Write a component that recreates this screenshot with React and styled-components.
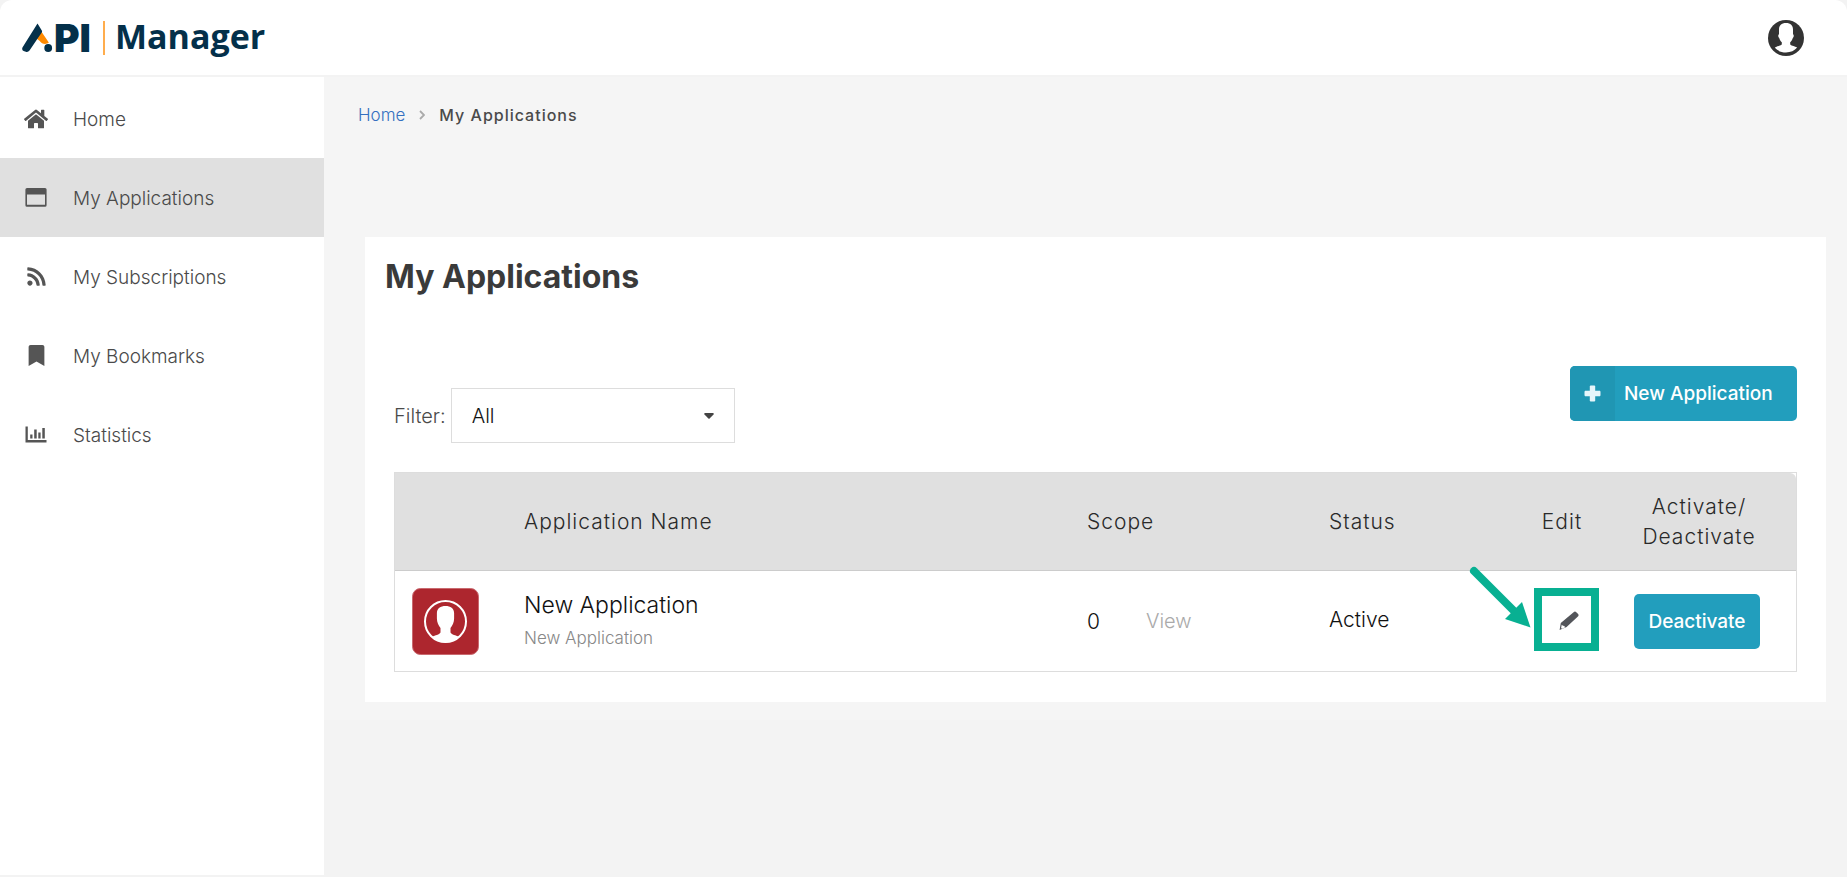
import React, { useState } from 'react';
import styled, { createGlobalStyle } from 'styled-components';
import { FaBookmark, FaHome, FaRss } from 'react-icons/fa';

const MENU = [
  { label: 'Home', icon: <FaHome size={24} /> },
  { label: 'My Applications', icon: <WindowIcon />, active: true },
  { label: 'My Subscriptions', icon: <FaRss size={21} /> },
  { label: 'My Bookmarks', icon: <FaBookmark size={21} /> },
  { label: 'Statistics', icon: <ChartIcon /> },
];

const APPLICATIONS = [
  {
    name: 'New Application',
    description: 'New Application',
    scope: 0,
    status: 'Active',
  },
];

function WindowIcon() {
  return (
    <svg width='22' height='19' viewBox='0 0 22 19'>
      <path
        fill='currentColor'
        fillRule='evenodd'
        d='M2 0h18a1.6 1.6 0 0 1 1.600 1.600v15.600a1.600 1.600 0 0 1-1.600 1.600H2a1.600 1.600 0 0 1-1.600-1.600V1.600A1.600 1.600 0 0 1 2 0zM2 6.500v10.300h18V6.500z'
      />
    </svg>
  );
}

function ChartIcon() {
  return (
    <svg width='22' height='17' viewBox='0 0 22 17'>
      <path
        fill='currentColor'
        d='M0.500 0.500h2.300v13.500h18.700v2.500H0.500zM5.200 8.500h2.300v4H5.200zM9.200 3.500h2.500v9H9.200zM13.300 6.500h2.300v6h-2.300zM17.300 2h2.500v10.500h-2.500z'
      />
    </svg>
  );
}

const PlusIcon = () => (
  <svg width='17' height='17' viewBox='0 0 17 17'>
    <path d='M8.500 1v15M1 8.500h15' stroke='currentColor' strokeWidth='5.400' />
    <path d='M8.500 .5v16M.5 8.500h16' stroke='currentColor' strokeWidth='4.600' />
  </svg>
);

const PencilIcon = () => (
  <svg width='20' height='20' viewBox='0 0 20 20'>
    <path
      fill='#53555a'
      fillRule='evenodd'
      d='M14.600 1.200q1.400-1.200 2.700 0l1.800 1.900q1 1.200-.2 2.400L7.600 16 .6 19l1.200-7zM2.700 13.800l-.6 3.200.8.800 3-1.200-.4-1.600-1.500-.2z'
    />
  </svg>
);

const AvatarIcon = () => (
  <svg width='36' height='36' viewBox='0 0 36 36'>
    <circle cx='18' cy='18' r='18' fill='#333' />
    <path
      fill='#fff'
      d='M18 3c4.600 0 7 2.600 7 6.400v4.800c1 .4 1 3-.2 3.800-.5 2-1.500 3.300-2.600 4.200v2.200c1.600 1.500 4.600 1.500 7 3.200-2.600 3.200-6.600 4.900-11.200 4.900S9.400 30.800 6.800 27.600c2.400-1.700 5.400-1.700 7-3.200v-2.200c-1.100-.9-2.100-2.200-2.600-4.200-1.200-.8-1.200-3.400-.2-3.800V9.400C11 5.600 13.400 3 18 3z'
    />
  </svg>
);

const AppIcon = () => (
  <svg width='67' height='67' viewBox='0 0 67 67'>
    <rect x='.5' y='.5' width='66' height='66' rx='8' fill='#ad262e' stroke='#c9696f' />
    <circle cx='33.500' cy='33.500' r='20.500' fill='none' stroke='#fff' strokeWidth='2' />
    <path
      fill='#fff'
      d='M33.500 18c5 0 8.600 2.400 8.600 7v5.500c0 4-1.600 7-3.600 9.500v4.500c1.500 2.600 5 2.500 8.500 4.300-3.500 3.700-8 5.700-13.500 5.700s-10-2-13.500-5.700c3.500-1.800 7-1.700 8.500-4.300V40c-2-2.500-3.600-5.500-3.600-9.500V25c0-4.600 3.600-7 8.600-7z'
    />
  </svg>
);

const LogoMark = () => (
  <svg width='32' height='30' viewBox='0 0 32 30'>
    <path fill='#ff8a00' d='M19.300 8.500l7.500 11c-2.600 2.400-7 1.800-9-1.500l-3.300-2.500z' />
    <path
      fill='#04304a'
      d='M15.500.500L19.800 7.500q.6 1-.1 2L7.500 27.500q-1.400 2-3.700 1.300L1.600 28q-2.200-1.200-1-3.700z'
    />
    <circle cx='26.200' cy='25' r='3.900' fill='#04304a' />
  </svg>
);

const Logo = () => (
  <LogoBox href='#home' aria-label='API Manager'>
    <LogoMark />
    <LogoBold>PI</LogoBold>
    <LogoDivider />
    <LogoName>Manager</LogoName>
  </LogoBox>
);

const Sidebar = () => (
  <Nav>
    {MENU.map((item) => (
      <MenuItem key={item.label} href='#menu' $active={item.active}>
        <MenuIcon>{item.icon}</MenuIcon>
        <MenuLabel>{item.label}</MenuLabel>
      </MenuItem>
    ))}
  </Nav>
);

const Filter = () => {
  const [value, setValue] = useState('all');

  return (
    <FilterBox>
      <label htmlFor='filter'>Filter:</label>
      <SelectBox>
        <Select id='filter' value={value} onChange={(e) => setValue(e.target.value)}>
          <option value='all'>All</option>
          <option value='active'>Active</option>
          <option value='inactive'>Inactive</option>
        </Select>
        <Caret viewBox='0 0 10 6'>
          <path fill='#444' d='M1.200 0h7.600Q10 0 9.800 1.200L5.600 5.600Q5 6 4.400 5.600L.2 1.200Q0 0 1.200 0z' />
        </Caret>
      </SelectBox>
    </FilterBox>
  );
};

const ApplicationTable = () => (
  <TableFrame>
    <Table>
      <colgroup>
        <Col $width={129} />
        <Col />
        <Col $width={242} />
        <Col $width={193} />
        <Col $width={80} />
        <Col $width={194} />
      </colgroup>
      <thead>
        <tr>
          <Th aria-label='Icon' />
          <Th>Application Name</Th>
          <Th>Scope</Th>
          <Th>Status</Th>
          <Th $center>Edit</Th>
          <Th $center>
            Activate/
            <br />
            Deactivate
          </Th>
        </tr>
      </thead>
      <tbody>
        {APPLICATIONS.map((app) => (
          <tr key={app.name}>
            <IconCell>
              <AppIcon />
            </IconCell>
            <Td>
              <AppName>{app.name}</AppName>
              <AppDescription>{app.description}</AppDescription>
            </Td>
            <Td>
              <Scope>
                <span>{app.scope}</span>
                <ViewLink href='#view'>View</ViewLink>
              </Scope>
            </Td>
            <StatusCell>{app.status}</StatusCell>
            <EditCell>
              <EditButton aria-label='Edit'>
                <PencilIcon />
              </EditButton>
              <Highlight />
              <Arrow viewBox='0 0 64 64'>
                <path d='M5 5l44 44' stroke='#08b092' strokeWidth='8' strokeLinecap='round' />
                <path d='M61.500 61.500L36 53l17-17z' fill='#08b092' />
              </Arrow>
            </EditCell>
            <ActionCell $center>
              <DeactivateButton>Deactivate</DeactivateButton>
            </ActionCell>
          </tr>
        ))}
      </tbody>
    </Table>
  </TableFrame>
);

const App = () => {
  return (
    <>
      <GlobalStyle />
      <Page>
        <Header>
          <Logo />
          <AccountButton aria-label='Account'>
            <AvatarIcon />
          </AccountButton>
        </Header>
        <Body>
          <Sidebar />
          <Main>
            <Content>
              <Breadcrumb>
                <CrumbLink href='#home'>Home</CrumbLink>
                <svg width='6' height='10' viewBox='0 0 6 10'>
                  <path d='M1 1l4 4-4 4' fill='none' stroke='#aaa' strokeWidth='1.800' />
                </svg>
                <Current>My Applications</Current>
              </Breadcrumb>
              <Card>
                <Title>My Applications</Title>
                <Toolbar>
                  <Filter />
                  <NewButton>
                    <NewIcon>
                      <PlusIcon />
                    </NewIcon>
                    <NewLabel>New Application</NewLabel>
                  </NewButton>
                </Toolbar>
                <ApplicationTable />
              </Card>
            </Content>
          </Main>
        </Body>
      </Page>
    </>
  );
};

export default App;

const GlobalStyle = createGlobalStyle`
  * {
    box-sizing: border-box;
  }

  body {
    margin: 0;
    background: #f3f3f3;
    color: #4a4a4a;
    font-family: Inter, 'Open Sans', sans-serif;
    font-size: 19px;
    font-weight: 300;
  }

  button,
  select {
    border: none;
    font: inherit;
    cursor: pointer;
  }

  a {
    text-decoration: none;
  }

  svg {
    display: block;
  }
`;

const Page = styled.div`
  display: flex;
  flex-direction: column;
  min-height: 100vh;
  padding-bottom: 2px;
`;

const Header = styled.header`
  display: flex;
  align-items: center;
  justify-content: space-between;
  height: 75px;
  padding: 0 43px 0 22px;
  border-radius: 12px 12px 0 0;
  background: #fff;
`;

const LogoBox = styled.a`
  display: flex;
  align-items: center;
  height: 36px;
  color: #04304a;
`;

const LogoBold = styled.span`
  font-size: 39px;
  font-weight: 900;
  line-height: 36px;
`;

const LogoDivider = styled.span`
  width: 2px;
  height: 34px;
  margin: 0 10px 0 12px;
  background: #ffad4d;
`;

const LogoName = styled.span`
  padding-bottom: 4px;
  font-family: 'Open Sans', sans-serif;
  font-size: 34px;
  font-weight: 700;
  line-height: 36px;
`;

const AccountButton = styled.button`
  padding: 0;
  border-radius: 50%;
  background: none;
`;

const Body = styled.div`
  display: flex;
  flex: 1;
  padding-top: 2px;
`;

const Nav = styled.nav`
  flex: none;
  width: 324px;
  padding-top: 2px;
  background: #fff;
`;

const MenuItem = styled.a`
  display: flex;
  align-items: center;
  gap: 25px;
  height: 79px;
  padding-left: 24px;
  background: ${({ $active }) => ($active ? '#e0e0e0' : 'transparent')};
  color: #4a4a4a;
`;

const MenuIcon = styled.span`
  display: flex;
  justify-content: center;
  width: 24px;
  color: #555;
`;

const MenuLabel = styled.span`
  padding-top: 2px;
`;

const Main = styled.main`
  flex: 1;
  min-width: 0;
`;

const Content = styled.div`
  padding: 26px 21px 18px 34px;
  background: #f5f5f5;
`;

const Breadcrumb = styled.div`
  display: flex;
  align-items: center;
  gap: 14px;
  height: 24px;
  font-size: 17px;
`;

const CrumbLink = styled.a`
  color: #3470c0;
`;

const Current = styled.span`
  color: #4a4a4a;
  font-size: 16px;
  font-weight: 500;
  letter-spacing: 1px;
`;

const Card = styled.section`
  margin: 110px 0 0 7px;
  padding: 16px 29px 30px;
  background: #fff;
`;

const Title = styled.h1`
  margin: 0 0 0 -9px;
  color: #3a3a3a;
  font-size: 32px;
  font-weight: 700;
  line-height: 48px;
`;

const Toolbar = styled.div`
  display: flex;
  align-items: flex-start;
  justify-content: space-between;
  margin: 65px 0 29px;
`;

const FilterBox = styled.div`
  display: flex;
  align-items: center;
  gap: 5px;
  padding-top: 22px;
  font-size: 20px;
`;

const SelectBox = styled.div`
  position: relative;
`;

const Select = styled.select`
  width: 284px;
  height: 55px;
  padding: 0 20px;
  border: 1px solid #ddd;
  appearance: none;
  background: #fff;
  color: #111;
`;

const Caret = styled.svg`
  position: absolute;
  top: 25px;
  right: 21px;
  width: 10px;
  height: 6px;
  pointer-events: none;
`;

const Button = styled.button`
  height: 55px;
  padding: 0;
  border-radius: 5px;
  background: #229ebd;
  color: #fff;
  font-size: 19px;
  font-weight: 500;
`;

const NewButton = styled(Button)`
  display: flex;
  overflow: hidden;
`;

const NewIcon = styled.span`
  display: flex;
  align-items: center;
  justify-content: center;
  width: 45px;
  height: 55px;
  background: #2096b3;
  color: #e6f5fa;
`;

const NewLabel = styled.span`
  width: 182px;
  padding-left: 9px;
  line-height: 55px;
  text-align: left;
`;

const DeactivateButton = styled(Button)`
  width: 126px;
`;

const TableFrame = styled.div`
  border: 1px solid #ddd;
`;

const Table = styled.table`
  width: 100%;
  border-spacing: 0;
  table-layout: fixed;
  color: #111;
  font-size: 21px;
`;

const Col = styled.col`
  width: ${({ $width }) => ($width ? `${$width}px` : 'auto')};
`;

const Th = styled.th`
  height: 98px;
  padding: 0;
  border-bottom: 1px solid #ccc;
  background: #e0e0e0;
  color: #2a2a2a;
  font-weight: 300;
  letter-spacing: 1px;
  line-height: 30px;
  text-align: ${({ $center }) => ($center ? 'center' : 'left')};

  &:last-child {
    border-top-right-radius: 6px;
  }
`;

const Td = styled.td`
  height: 100px;
  padding: 0;
  text-align: ${({ $center }) => ($center ? 'center' : 'left')};
`;

const IconCell = styled(Td)`
  padding-left: 17px;
`;

const StatusCell = styled(Td)`
  padding-bottom: 4px;
`;

const ActionCell = styled(Td)`
  padding-right: 4px;
`;

const AppName = styled.div`
  font-size: 23px;
  line-height: 34px;
`;

const AppDescription = styled.div`
  color: #888;
  font-size: 17px;
  line-height: 32px;
`;

const Scope = styled.div`
  display: flex;
  align-items: center;
  gap: 46px;
`;

const ViewLink = styled.a`
  color: #aaa;
  font-size: 20px;
`;

const EditCell = styled(Td)`
  position: relative;
`;

const EditButton = styled.button`
  display: block;
  margin-left: 37px;
  padding: 0;
  background: none;
`;

const Highlight = styled.span`
  position: absolute;
  top: 17px;
  left: 12px;
  width: 65px;
  height: 63px;
  border: 8px solid #08b092;
  pointer-events: none;
`;

const Arrow = styled.svg`
  position: absolute;
  top: -5px;
  left: -53px;
  width: 64px;
  height: 64px;
  pointer-events: none;
`;
